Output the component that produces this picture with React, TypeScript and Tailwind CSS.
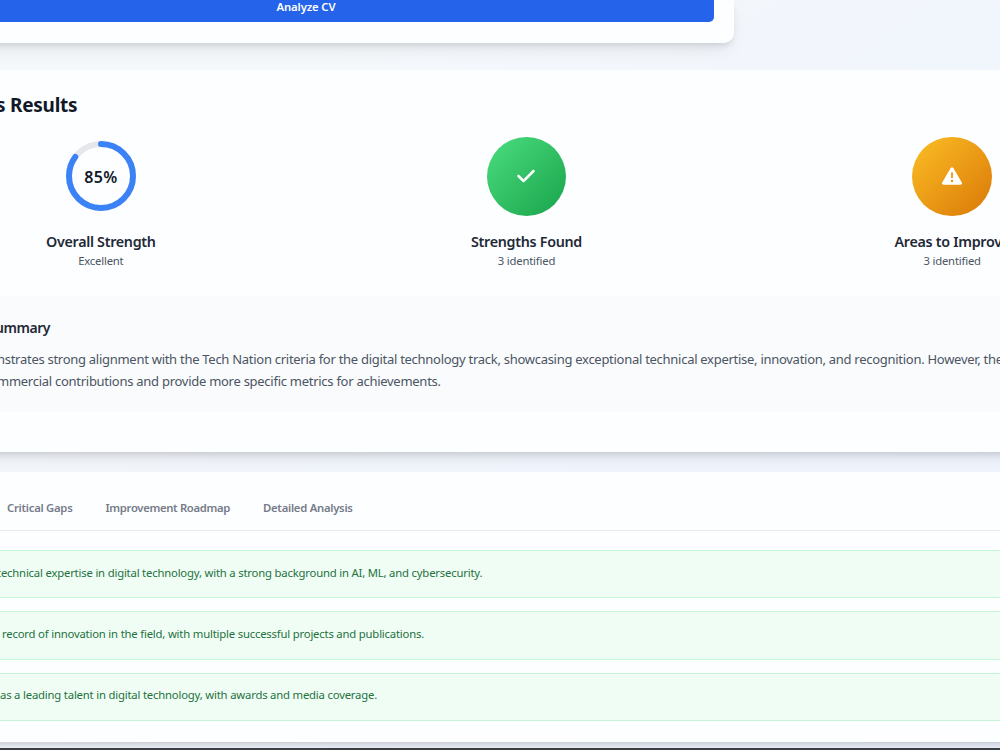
import React from 'react';
import { FaCheck, FaTriangleExclamation } from 'react-icons/fa6';

interface Stat {
  title: string;
  caption: string;
  visual: React.ReactNode;
}

const ScoreRing = ({ score }: { score: number }) => {
  const radius = 32;
  const length = 2 * Math.PI * radius;

  return (
    <div className="relative w-20 h-20 flex items-center justify-center">
      <svg viewBox="0 0 80 80" className="absolute inset-0 w-20 h-20 -rotate-90">
        <circle cx="40" cy="40" r={radius} fill="none" stroke="#e5e7eb" strokeWidth="6" />
        <circle
          cx="40"
          cy="40"
          r={radius}
          fill="none"
          stroke="#3b82f6"
          strokeWidth="6"
          strokeLinecap="round"
          strokeDasharray={`${(length * score) / 100} ${length}`}
        />
      </svg>
      <span className="relative pt-[2px] text-[16px] font-semibold text-[#111827] tracking-[0.3px]">{score}%</span>
    </div>
  );
};

const stats: Stat[] = [
  {
    title: 'Overall Strength',
    caption: 'Excellent',
    visual: <ScoreRing score={85} />,
  },
  {
    title: 'Strengths Found',
    caption: '3 identified',
    visual: (
      <div className="mt-[0.5px] w-[79.5px] h-[79.5px] rounded-full bg-linear-to-br from-[#4ade80] to-[#16a34a] flex items-center justify-center">
        <FaCheck className="text-white text-[20px]" />
      </div>
    ),
  },
  {
    title: 'Areas to Improve',
    caption: '3 identified',
    visual: (
      <div className="mt-[0.5px] w-[79.5px] h-[79.5px] rounded-full bg-linear-to-br from-[#fbbf24] to-[#d97706] flex items-center justify-center">
        <FaTriangleExclamation className="text-white text-[20px]" />
      </div>
    ),
  },
];

const tabs = [
  { label: 'Critical Gaps', style: 'w-[98.5px]' },
  { label: 'Improvement Roadmap', style: 'w-[157.5px] tracking-[-0.34px]' },
  { label: 'Detailed Analysis', style: '' },
];

const strengths = [
  { text: 'technical expertise in digital technology, with a strong background in AI, ML, and cybersecurity.', style: '-ml-[3px]' },
  { text: 'record of innovation in the field, with multiple successful projects and publications.', style: 'ml-[2px]' },
  { text: 'as a leading talent in digital technology, with awards and media coverage.', style: '' },
];

const App = () => {
  return (
    <div className="w-[1000px] h-[750px] overflow-hidden flex flex-col bg-linear-to-br from-[#f5f8fb] from-20% via-[#f1f5fc] to-[#eff4ff] font-['Noto_Sans','Open_Sans',sans-serif] whitespace-nowrap">
      <div className="h-[43px] w-[774px] -ml-10 shrink-0 pl-10 pr-5 bg-[#fdfeff] rounded-br-[10px] shadow-[0_8px_18px_-4px_rgba(0,0,0,0.1),0_4px_6px_-2px_rgba(0,0,0,0.1)]">
        <button className="h-[22px] w-full pl-0 pr-[102px] pb-[15px] bg-[#2563eb] rounded-br-[5px] text-white text-[11.3px] font-semibold leading-[14px] tracking-[-0.12px] block">
          Analyze CV
        </button>
      </div>

      <section className="relative mt-[27px] -mx-10 px-10 h-[382px] shrink-0 bg-[#fdfeff] shadow-[0_12px_16px_-8px_rgba(0,0,0,0.12),0_5px_6px_-3px_rgba(0,0,0,0.1)]">
        <h2 className="pt-[21px] -ml-[4px] text-[19px] leading-7 font-bold text-[#111827] tracking-[-0.25px]">s Results</h2>
        <div className="mt-[17px] -ml-[112px] w-[1277px] grid grid-cols-3">
          {stats.map((stat) => (
            <div key={stat.title} className="flex flex-col items-center">
              {stat.visual}
              <h3 className="mt-[14px] text-[14.3px] leading-[23px] font-semibold text-[#1f2937] tracking-[-0.3px]">{stat.title}</h3>
              <p className="text-[11.3px] leading-4 text-[#4b5563] tracking-[-0.2px]">{stat.caption}</p>
            </div>
          ))}
        </div>

        <div className="mt-[27px] -mx-10 px-10 h-[116px] pt-5 bg-[#fafbfc]">
          <h3 className="-ml-[5px] text-[14px] leading-[23px] font-semibold text-[#1f2937] tracking-[-0.45px]">ummary</h3>
          <div className="mt-[10px] text-[13px] leading-[21.6px] text-[#4b5563]">
            <p className="-ml-[3px] tracking-[-0.278px]">
              nstrates strong alignment with the Tech Nation criteria for the digital technology track, showcasing exceptional technical expertise, innovation, and recognition. However, the
            </p>
            <p className="-ml-[3px] tracking-[-0.27px]">mmercial contributions and provide more specific metrics for achievements.</p>
          </div>
        </div>
      </section>

      <section className="relative mt-5 -mx-10 px-10 h-[270px] shrink-0 bg-[#fdfeff] shadow-[0_5px_8px_-3px_rgba(0,0,0,0.22)]">
        <nav className="-mx-10 px-10 h-[59px] pt-[25.5px] flex border-b border-[#e8eaee] text-[11.3px] leading-5 font-semibold text-[#757b89] tracking-[-0.27px]">
          {tabs.map((tab) => (
            <span key={tab.label} className={`relative left-[7px] ${tab.style}`}>
              {tab.label}
            </span>
          ))}
        </nav>
        <div className="pt-[19px] flex flex-col gap-[13px]">
          {strengths.map((item) => (
            <div key={item.text} className="-mx-10 px-10 h-[48.3px] pb-[2px] flex items-center border-y border-[#c5f5d7] bg-[#f0fdf4] text-[11.3px] text-[#24713f] tracking-[-0.19px]">
              <p className={item.style}>{item.text}</p>
            </div>
          ))}
        </div>
      </section>
      <div className="relative mt-[6px] h-[2px] shrink-0 bg-[#3a3d42]" />
    </div>
  );
};

export default App;
